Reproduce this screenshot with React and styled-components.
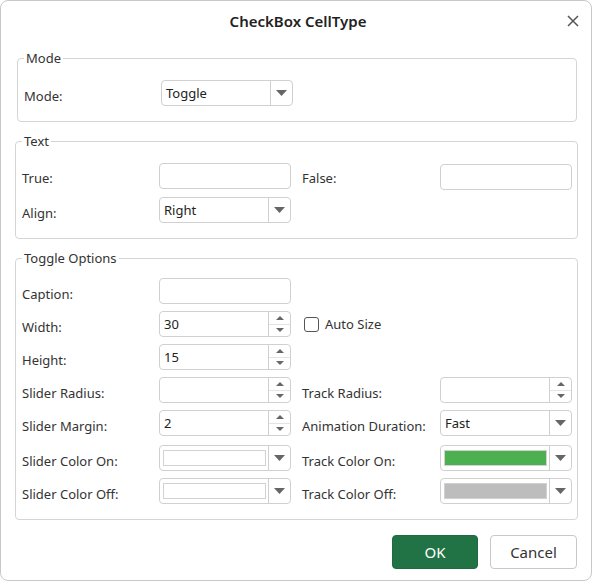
import React from 'react';
import styled, { createGlobalStyle } from 'styled-components';

const GlobalStyle = createGlobalStyle`
  html, body {
    margin: 0;
    padding: 0;
    background: #fff;
  }
  body {
    font-family: "Noto Sans", "Open Sans", sans-serif;
    font-size: 13px;
    color: #333;
  }
`;

const Dialog = styled.div`
  width: 592px;
  height: 581px;
  box-sizing: border-box;
  border: 1px solid #c9c9c9;
  border-radius: 8px;
  background: #fff;
  display: flex;
  flex-direction: column;
`;

const Header = styled.header`
  height: 39px;
  display: grid;
  grid-template-columns: 1fr auto 1fr;
  align-items: center;
  padding: 0 12px;
`;

const Title = styled.h1`
  grid-column: 2;
  margin: 0 0 0 4px;
  font-size: 15px;
  font-weight: 600;
  color: #222;
`;

const CloseButton = styled.button`
  justify-self: end;
  width: 12px;
  height: 12px;
  padding: 0;
  border: 0;
  background: none;
  display: flex;
  cursor: pointer;
`;

const Body = styled.div`
  display: flex;
  flex-direction: column;
  gap: 10px;
  padding-top: 9px;
`;

const Group = styled.fieldset`
  margin: ${p => (p.$inset ? '0 14px 0 16px' : '0 13px 0 14px')};
  padding: ${p => (p.$inset ? 13 : 11)}px 4px 15px 6px;
  border: 1px solid #d5d5d5;
  border-radius: 4px;
  min-width: 0;
`;

const Legend = styled.legend`
  padding: 0 2px;
  font-size: 13px;
  line-height: 18px;
  color: #333;
`;

const Row = styled.div`
  display: grid;
  grid-template-columns: 137px 143px 138px 132px;
  align-items: center;
  height: 26px;
  margin-top: ${p => p.$gap ?? 0}px;
`;

const Label = styled.label`
  padding-top: 5px;
  white-space: nowrap;
  color: #333;
`;

const Box = styled.div`
  width: 132px;
  height: 26px;
  box-sizing: border-box;
  border: 1px solid #d0d0d0;
  border-radius: 4px;
  background: #fff;
  display: flex;
  margin-top: ${p => p.$nudge ?? 0}px;
`;

const TextInput = styled.input`
  width: 132px;
  height: 26px;
  box-sizing: border-box;
  border: 1px solid #d0d0d0;
  border-radius: 4px;
  padding: 0 4px;
  font: inherit;
  color: #222;
  outline: none;
  margin-top: ${p => p.$nudge ?? 0}px;
`;

const Value = styled.span`
  flex: 1;
  display: flex;
  align-items: center;
  padding-left: 4px;
  color: #222;
  min-width: 0;
`;

const DropButton = styled.span`
  width: 21px;
  border-left: 1px solid #d0d0d0;
  display: flex;
  align-items: center;
  justify-content: center;
`;

const SpinButtons = styled.span`
  width: 21px;
  border-left: 1px solid #d0d0d0;
  display: flex;
  flex-direction: column;
`;

const SpinHalf = styled.span`
  flex: 1;
  display: flex;
  align-items: center;
  justify-content: center;
  & + & {
    border-top: 1px solid #e4e4e4;
  }
`;

const SwatchWell = styled.span`
  flex: 1;
  display: flex;
  padding: 4px 2px 4px 3px;
`;

const Swatch = styled.span`
  flex: 1;
  box-sizing: border-box;
  border: 1px solid #d2d2d2;
  background: ${p => p.$color};
`;

const CheckWrap = styled.label`
  display: flex;
  align-items: center;
  gap: 6px;
  padding-left: 2px;
  color: #333;
`;

const CheckSquare = styled.span`
  width: 15px;
  height: 15px;
  box-sizing: border-box;
  border: 1px solid #555;
  border-radius: 3px;
  background: #fff;
`;

const Footer = styled.footer`
  display: flex;
  justify-content: flex-end;
  gap: 12px;
  margin-top: 15px;
  padding-right: 14px;
`;

const Button = styled.button`
  width: ${p => p.$w}px;
  height: 34px;
  box-sizing: border-box;
  border-radius: 4px;
  font-family: inherit;
  font-size: 15px;
  cursor: pointer;
  border: 1px solid ${p => (p.$primary ? '#1e6b41' : '#c8c8c8')};
  background: ${p => (p.$primary ? '#217346' : '#fff')};
  color: ${p => (p.$primary ? '#fff' : '#333')};
`;

const Caret = ({ up, small }) => {
  const w = small ? 8 : 11;
  const h = small ? 4 : 6;
  return (
    <svg width={w} height={h} viewBox={`0 0 ${w} ${h}`}>
      <path
        d={up ? `M0 ${h} L${w / 2} 0 L${w} ${h} Z` : `M0 0 L${w} 0 L${w / 2} ${h} Z`}
        fill="#666"
      />
    </svg>
  );
};

const Select = ({ value }) => (
  <Box>
    <Value>{value}</Value>
    <DropButton><Caret /></DropButton>
  </Box>
);

const Spinner = ({ value }) => (
  <Box>
    <Value>{value}</Value>
    <SpinButtons>
      <SpinHalf><Caret up small /></SpinHalf>
      <SpinHalf><Caret small /></SpinHalf>
    </SpinButtons>
  </Box>
);

const ColorPicker = ({ color }) => (
  <Box>
    <SwatchWell><Swatch $color={color} /></SwatchWell>
    <DropButton><Caret /></DropButton>
  </Box>
);

export default function App() {
  return (
    <>
      <GlobalStyle />
      <Dialog>
        <Header>
          <Title>CheckBox CellType</Title>
          <CloseButton aria-label="Close">
            <svg width="12" height="12" viewBox="0 0 12 12">
              <path d="M1 1 L11 11 M11 1 L1 11" stroke="#555" strokeWidth="1.5" />
            </svg>
          </CloseButton>
        </Header>

        <Body>
          <Group $inset>
            <Legend>Mode</Legend>
            <Row>
              <Label>Mode:</Label>
              <Select value="Toggle" />
            </Row>
          </Group>

          <Group>
            <Legend>Text</Legend>
            <Row>
              <Label>True:</Label>
              <TextInput />
              <Label>False:</Label>
              <TextInput $nudge={3} />
            </Row>
            <Row $gap={10}>
              <Label>Align:</Label>
              <Select value="Right" />
            </Row>
          </Group>

          <Group>
            <Legend>Toggle Options</Legend>
            <Row>
              <Label>Caption:</Label>
              <TextInput />
            </Row>
            <Row $gap={7}>
              <Label>Width:</Label>
              <Spinner value="30" />
              <CheckWrap>
                <CheckSquare />
                Auto Size
              </CheckWrap>
            </Row>
            <Row $gap={7}>
              <Label>Height:</Label>
              <Spinner value="15" />
            </Row>
            <Row $gap={7}>
              <Label>Slider Radius:</Label>
              <Spinner value="" />
              <Label>Track Radius:</Label>
              <Spinner value="" />
            </Row>
            <Row $gap={7}>
              <Label>Slider Margin:</Label>
              <Spinner value="2" />
              <Label>Animation Duration:</Label>
              <Select value="Fast" />
            </Row>
            <Row $gap={9}>
              <Label>Slider Color On:</Label>
              <ColorPicker color="#fff" />
              <Label>Track Color On:</Label>
              <ColorPicker color="#4caf50" />
            </Row>
            <Row $gap={7}>
              <Label>Slider Color Off:</Label>
              <ColorPicker color="#fff" />
              <Label>Track Color Off:</Label>
              <ColorPicker color="#bdbdbd" />
            </Row>
          </Group>
        </Body>

        <Footer>
          <Button $primary $w={86}>OK</Button>
          <Button $w={87}>Cancel</Button>
        </Footer>
      </Dialog>
    </>
  );
}
